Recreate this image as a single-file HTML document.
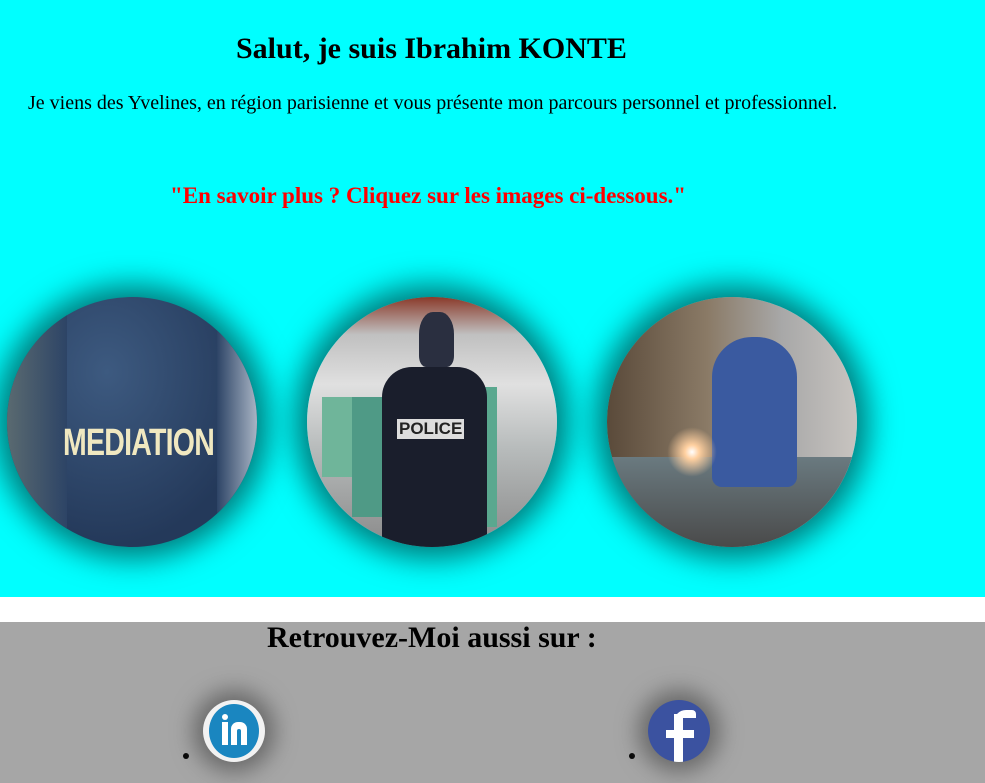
<!DOCTYPE html>
<html><head><meta charset="utf-8"><style>
body{margin:0;width:985px;height:783px;overflow:hidden;font-family:"Liberation Serif",serif;background:#fff;position:relative}
.top{position:absolute;left:0;top:0;width:985px;height:597px;background:#00ffff}
.bot{position:absolute;left:0;top:622px;width:985px;height:161px;background:#a6a6a6}
.t{position:absolute;white-space:nowrap;margin:0}
.c{position:absolute;top:297px;width:250px;height:250px;border-radius:50%;box-shadow:0 0 30px 12px #007a7a;overflow:hidden}
.ic{position:absolute;top:700px;width:62px;height:62px;border-radius:50%;box-shadow:0 0 22px 10px #6a6a6a;overflow:hidden}
.dot{position:absolute;width:6px;height:6px;border-radius:50%;background:#000;top:753px}
</style></head><body>
<div class="top"></div>
<div class="bot"></div>
<h1 class="t" style="left:236px;top:32px;font-size:30px">Salut, je suis Ibrahim KONTE</h1>
<p class="t" style="left:28px;top:92px;font-size:20px">Je viens des Yvelines, en région parisienne et vous présente mon parcours personnel et professionnel.</p>
<p class="t" style="left:170px;top:183px;font-size:23px;font-weight:bold;color:#f00">"En savoir plus ? Cliquez sur les images ci-dessous."</p>

<div class="c" style="left:7px;background:radial-gradient(ellipse at 40% 30%,#3d5a80,#24395a 70%),#2a4160">
<div style="position:absolute;left:0;top:0;width:60px;height:250px;background:linear-gradient(90deg,#5a6a70,#2d4466)"></div>
<div style="position:absolute;right:0;top:0;width:40px;height:250px;background:linear-gradient(90deg,#2d4466,#a8b4c4)"></div>
<div style="position:absolute;left:56px;top:125px;font:bold 38px 'Liberation Sans Narrow','Liberation Sans',sans-serif;color:#f0e8c0;transform:scaleX(.75);transform-origin:left;letter-spacing:-1px">MEDIATION</div></div>

<div class="c" style="left:307px;background:linear-gradient(180deg,#8a3a2a 0%,#c0c0c0 15%,#e0e0e0 35%,#b8bcbc 60%,#8a8a8a 100%)">
<div style="position:absolute;left:15px;top:100px;width:30px;height:80px;background:#6fb59a"></div>
<div style="position:absolute;left:45px;top:100px;width:30px;height:120px;background:#4f9a86"></div>
<div style="position:absolute;left:150px;top:90px;width:40px;height:140px;background:#5aa88f"></div>
<div style="position:absolute;left:75px;top:70px;width:105px;height:190px;background:#1a1e2c;border-radius:30px 30px 0 0"></div>
<div style="position:absolute;left:112px;top:15px;width:35px;height:55px;background:#2a2f40;border-radius:40% 40% 20% 20%"></div>
<div style="position:absolute;left:90px;top:122px;font:bold 17px 'Liberation Sans',sans-serif;color:#222;background:#ddd;padding:0 2px">POLICE</div></div>

<div class="c" style="left:607px;background:linear-gradient(90deg,#5a4a3a,#8a7a66 40%,#a8a8a8 70%,#c8c4c0)">
<div style="position:absolute;left:0;top:160px;width:250px;height:90px;background:linear-gradient(180deg,#6a7a80,#4a4a4a)"></div>
<div style="position:absolute;left:105px;top:40px;width:85px;height:150px;background:#3a5aa0;border-radius:40px 40px 10px 10px"></div>
<div style="position:absolute;left:60px;top:130px;width:50px;height:50px;background:radial-gradient(circle,#fff 0,#ffd0a0 20%,transparent 70%)"></div></div>

<div class="dot" style="left:183px"></div>
<div class="dot" style="left:629px"></div>
<div class="ic" style="left:203px;background:#f2f2f2">
<div style="position:absolute;left:6px;top:4px;width:50px;height:54px;border-radius:50%;background:#1a86c0"></div>
<div style="position:absolute;left:19px;top:14px;width:6px;height:6px;border-radius:50%;background:#fff"></div>
<div style="position:absolute;left:19px;top:22px;width:6px;height:23px;background:#fff"></div>
<div style="position:absolute;left:28px;top:22px;width:16px;height:23px;background:#fff;border-radius:7px 7px 0 0"></div>
<div style="position:absolute;left:34px;top:29px;width:4px;height:16px;background:#1a86c0;border-radius:2px 2px 0 0"></div></div>
<div class="ic" style="left:648px;background:#3b52a0">
<div style="position:absolute;left:26px;top:14px;width:9px;height:50px;background:#fff"></div>
<div style="position:absolute;left:26px;top:10px;width:22px;height:12px;background:#fff;border-radius:12px 4px 0 0"></div>
<div style="position:absolute;left:35px;top:18px;width:14px;height:4px;background:#3b52a0"></div>
<div style="position:absolute;left:18px;top:30px;width:28px;height:8px;background:#fff"></div></div>

<h2 class="t" style="left:267px;top:621px;font-size:30px">Retrouvez-Moi aussi sur :</h2>
</body></html>
